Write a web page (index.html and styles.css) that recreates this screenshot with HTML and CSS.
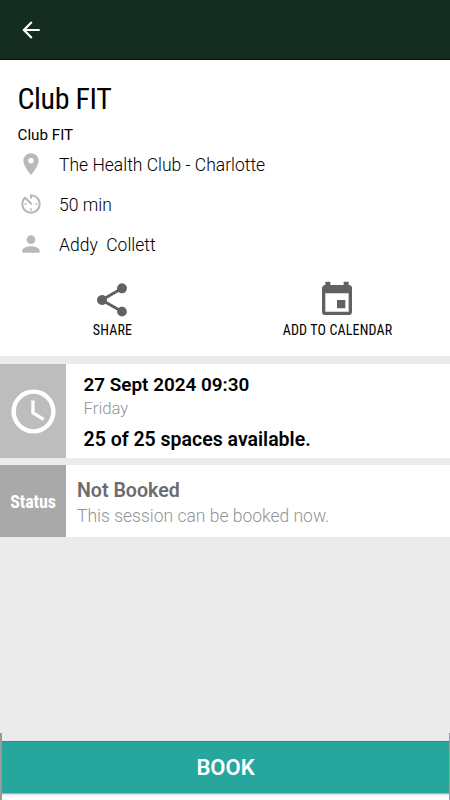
FILE: index.html
```html
<!DOCTYPE html>
<html lang="en">
<head>
<meta charset="utf-8">
<title>Club FIT</title>
<link rel="stylesheet" href="styles.css">
</head>
<body>
<div class="screen">
  <header class="bar">
    <svg class="back" viewBox="0 0 24 24"><path d="M20 11H7.8l5.6-5.6L12 4l-8 8 8 8 1.4-1.4L7.8 13H20z"/></svg>
  </header>
  <section class="summary">
    <h1 class="title">Club FIT</h1>
    <p class="subtitle">Club FIT</p>
    <ul class="facts">
      <li class="fact"><svg class="fact-icon" viewBox="0 0 24 24"><path d="M12 2C8.1 2 5 5.100 5 9c0 5.250 7 13 7 13s7-7.750 7-13c0-3.900-3.100-7-7-7zm0 9.500a2.500 2.500 0 1 1 0-5 2.500 2.500 0 0 1 0 5z"/></svg><span class="fact-text">The Health Club - Charlotte</span></li>
      <li class="fact"><svg class="fact-icon" viewBox="0 0 24 24"><path d="M11 17a1 1 0 0 0 2 0 1 1 0 0 0-2 0zm0-14v4h2V5.080c3.390.49 6 3.390 6 6.920 0 3.870-3.130 7-7 7s-7-3.130-7-7c0-1.680.59-3.220 1.580-4.420L12 13l1.410-1.410-6.800-6.800v.02C4.420 6.450 3 9.050 3 12a9 9 0 1 0 9-9zm7 9a1 1 0 0 0-2 0 1 1 0 0 0 2 0zM6 12a1 1 0 0 0 2 0 1 1 0 0 0-2 0z"/></svg><span class="fact-text">50 min</span></li>
      <li class="fact"><svg class="fact-icon" viewBox="0 0 24 24"><path d="M12 12a4 4 0 1 0 0-8 4 4 0 0 0 0 8zm0 2c-2.670 0-8 1.340-8 4v2h16v-2c0-2.660-5.330-4-8-4z"/></svg><span class="fact-text">Addy&nbsp; Collett</span></li>
    </ul>
    <div class="actions">
      <div class="action">
        <svg class="action-icon" viewBox="0 0 24 24"><path d="M18 16.080c-.76 0-1.440.3-1.960.77L8.910 12.700c.05-.23.09-.46.09-.7s-.04-.47-.09-.7l7.050-4.110A3 3 0 1 0 15 5c0 .24.04.47.09.7L8.040 9.810A3 3 0 1 0 8.040 14.190l7.120 4.160c-.05.21-.08.43-.08.65A2.920 2.920 0 1 0 18 16.080z"/></svg>
        <span class="action-label">SHARE</span>
      </div>
      <div class="action">
        <svg class="action-icon" viewBox="0 0 24 24"><path d="M17 12h-5v5h5zM16 1v2H8V1H5v2c-1.110 0-2 .9-2 2v14a2 2 0 0 0 2 2h14a2 2 0 0 0 2-2V5a2 2 0 0 0-2-2V1zM19 19H5V8h14z"/></svg>
        <span class="action-label">ADD TO CALENDAR</span>
      </div>
    </div>
  </section>
  <section class="card schedule">
    <div class="tile"><svg class="clock" viewBox="0 0 24 24"><path d="M12 2a10 10 0 1 0 0 20 10 10 0 0 0 0-20zm0 18a8 8 0 1 1 0-16 8 8 0 0 1 0 16zm.5-13H11v6l5.250 3.150.75-1.230-4.500-2.670z"/></svg></div>
    <div class="card-body">
      <p class="date">27 Sept 2024 09:30</p>
      <p class="day">Friday</p>
      <p class="spaces">25 of 25 spaces available.</p>
    </div>
  </section>
  <section class="card status">
    <div class="tile"><span class="tile-label">Status</span></div>
    <div class="card-body">
      <p class="state">Not Booked</p>
      <p class="hint">This session can be booked now.</p>
    </div>
  </section>
  <footer class="footer"><button class="book">BOOK</button></footer>
</div>
</body>
</html>
```

FILE: styles.css
```css
* { box-sizing: border-box; margin: 0; padding: 0; }
body { font-family: Roboto, "Liberation Sans", sans-serif; color: #000; background: #ebebeb; }
svg { display: block; fill: currentColor; flex: none; }
.screen { width: 450px; height: 800px; display: flex; flex-direction: column; overflow: hidden; }
.bar { height: 60px; background: #152c20; border-bottom: 1px solid #07120c; display: flex; align-items: center; padding-left: 18px; color: #fff; flex: none; }
.back { width: 26px; height: 26px; }
.summary { height: 296px; background: #fff; padding-top: 19px; flex: none; }
.title { font-size: 30px; line-height: 40px; font-weight: 400; font-stretch: 75%; letter-spacing: -.4px; padding-left: 17.5px; }
.subtitle { font-size: 15.2px; line-height: 20px; height: 25px; font-weight: 390; padding: 6px 0 0 17.5px; }
.facts { list-style: none; }
.fact { height: 40px; display: flex; align-items: center; padding-left: 18px; }
.fact-icon { width: 26px; height: 26px; color: #b9b9b9; }
.fact-text { font-size: 17.5px; font-weight: 300; margin-left: 15px; padding-top: 1px; white-space: nowrap; }
.actions { display: grid; grid-template-columns: 1fr 1fr; padding-top: 16px; }
.action { display: flex; flex-direction: column; align-items: center; }
.action-icon { width: 40px; height: 40px; color: #616161; margin-right: 1px; }
.action-label { font-size: 14px; line-height: 21px; font-weight: 390; font-stretch: 75%; letter-spacing: .15px; }
.card { display: flex; background: #fff; flex: none; margin-top: 7px; }
.schedule { height: 94px; margin-top: 8px; }
.status { height: 72px; }
.tile { width: 66px; display: flex; align-items: center; justify-content: center; background: #bdbdbd; color: #fff; flex: none; }
.status .tile { background: #a9a9a9; }
.clock { width: 53px; height: 53px; }
.tile-label { font-size: 18px; font-weight: 700; font-stretch: 75%; letter-spacing: -.1px; padding-top: 1px; }
.card-body { padding: 9px 0 0 17.5px; white-space: nowrap; }
.status .card-body { padding: 13px 0 0 11px; }
.date { font-size: 18.9px; line-height: 24px; font-weight: 560; }
.day { font-size: 16.8px; line-height: 23px; font-weight: 300; color: #949494; }
.spaces { font-size: 19.5px; line-height: 24px; font-weight: 560; margin-top: 8px; }
.state { font-size: 19.6px; line-height: 26px; font-weight: 600; color: #6c6c6c; }
.hint { font-size: 17.5px; line-height: 24px; font-weight: 300; color: #949494; }
.footer { height: 67px; margin-top: auto; border: solid #999; border-width: 0 1px 0 2px; padding-top: 8px; background: linear-gradient(#ebebeb 0 8px, #d8d8d8 60px, #fff 64px); flex: none; }
.book { display: block; width: 100%; height: 53px; border: 0; border-top: 1px solid #16998c; border-bottom: 1px solid #7bc5bd; background: #26a69c; color: #fff; font: 650 22px/52px Roboto, sans-serif; }
```
